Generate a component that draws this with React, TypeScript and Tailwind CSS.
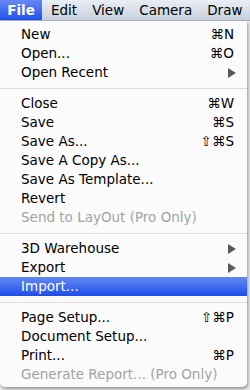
import React from 'react';

type Item =
    | { sep: true }
    | { label: string; shortcut?: string; submenu?: boolean; disabled?: boolean; active?: boolean };

const items: Item[] = [
    { label: 'New', shortcut: '⌘N' },
    { label: 'Open...', shortcut: '⌘O' },
    { label: 'Open Recent', submenu: true },
    { sep: true },
    { label: 'Close', shortcut: '⌘W' },
    { label: 'Save', shortcut: '⌘S' },
    { label: 'Save As...', shortcut: '⇧⌘S' },
    { label: 'Save A Copy As...' },
    { label: 'Save As Template...' },
    { label: 'Revert' },
    { label: 'Send to LayOut (Pro Only)', disabled: true },
    { sep: true },
    { label: '3D Warehouse', submenu: true },
    { label: 'Export', submenu: true },
    { label: 'Import...', active: true },
    { sep: true },
    { label: 'Page Setup...', shortcut: '⇧⌘P' },
    { label: 'Document Setup...' },
    { label: 'Print...', shortcut: '⌘P' },
    { label: 'Generate Report... (Pro Only)', disabled: true },
];

const menus = ['Edit', 'View', 'Camera', 'Draw'];

function Arrow({ white }: { white?: boolean }) {
    return (
        <svg width="8" height="10" viewBox="0 0 8 10">
            <path d="M0 0 L8 5 L0 10 Z" fill={white ? '#fff' : '#5a5a5a'} />
        </svg>
    );
}

export default function App() {
    return (
        <div
            className="w-[250px] h-[390px] overflow-hidden bg-[#e9e9e9] flex flex-col"
            style={{ fontFamily: '"DejaVu Sans", "Liberation Sans", sans-serif' }}
        >
            <div className="h-[21px] shrink-0 flex items-stretch overflow-hidden bg-gradient-to-b from-[#e9eef5] to-[#c8d0dc] border-b border-[#a8afba] text-[13.5px] text-black">
                <div className="w-[42px] shrink-0 flex items-center justify-center font-bold text-white bg-gradient-to-b from-[#6688f5] to-[#1e4fea]">
                    File
                </div>
                <div className="flex items-center shrink-0 pl-[9px] gap-[15px] whitespace-nowrap">
                    {menus.map((m) => (
                        <span key={m} className="shrink-0">{m}</span>
                    ))}
                </div>
            </div>
            <div className="w-[247px] shrink-0 bg-[#fbfbfb] rounded-b-[5px] pt-[4px] pb-[3px] shadow-[1px_2px_3px_rgba(0,0,0,0.35)] text-[13.5px]">
                {items.map((it, i) =>
                    'sep' in it ? (
                        <div key={i} className="h-[12px] flex items-center">
                            <div className="w-full h-px bg-[#dcdcdc]" />
                        </div>
                    ) : (
                        <div
                            key={i}
                            className={
                                'h-[19px] flex items-center pl-[21px] pr-[11px] ' +
                                (it.active
                                    ? 'bg-gradient-to-b from-[#6487f3] to-[#1c4ce9] text-white'
                                    : it.disabled
                                    ? 'text-[#a3a3a3]'
                                    : 'text-black')
                            }
                        >
                            <span className="flex-1 whitespace-nowrap">{it.label}</span>
                            {it.shortcut && <span className="pr-[2px]">{it.shortcut}</span>}
                            {it.submenu && <Arrow white={it.active} />}
                        </div>
                    )
                )}
            </div>
        </div>
    );
}
